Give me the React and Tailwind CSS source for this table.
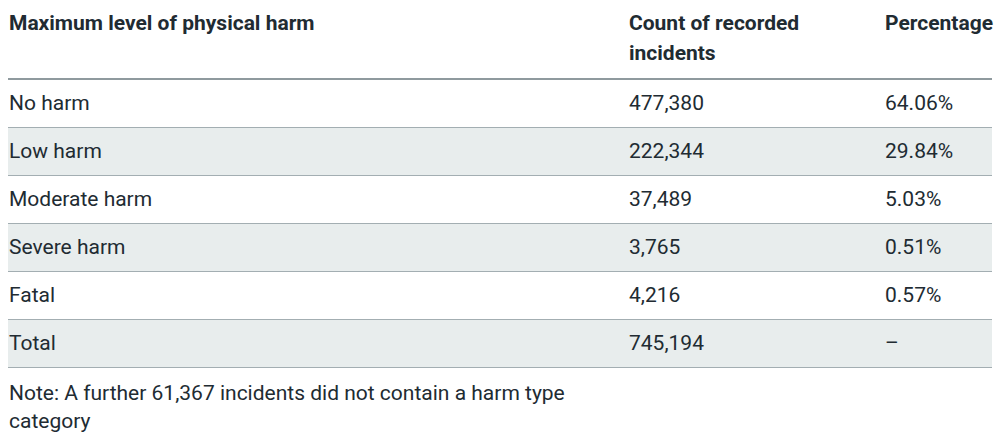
const rows = [
  ["No harm", "477,380", "64.06%"],
  ["Low harm", "222,344", "29.84%"],
  ["Moderate harm", "37,489", "5.03%"],
  ["Severe harm", "3,765", "0.51%"],
  ["Fatal", "4,216", "0.57%"],
  ["Total", "745,194", "–"],
];

export default function App() {
  return (
    <div className="bg-white px-2 text-[21px] leading-[29px] text-[#212b32] font-['Roboto',sans-serif]">
      <table className="w-[984px] border-collapse table-fixed">
        <colgroup>
          <col className="w-[621px]" />
          <col className="w-[256px]" />
          <col className="w-[107px]" />
        </colgroup>
        <thead>
          <tr className="border-b-2 border-[#8f9a9e] text-left align-top leading-[30px]">
            <th className="pl-px pt-2 pb-[10px] font-bold">Maximum level of physical harm</th>
            <th className="pt-2 pb-[10px] font-bold">Count of recorded incidents</th>
            <th className="pt-2 pb-[10px] font-bold whitespace-nowrap">Percentage</th>
          </tr>
        </thead>
        <tbody>
          {rows.map((r, i) => (
            <tr
              key={r[0]}
              className={`border-b border-[#a3aeb2] ${i % 2 ? "bg-[#e8eded]" : "bg-white"}`}
            >
              <td className="pl-px py-[9px]">{r[0]}</td>
              <td className="py-[9px]">{r[1]}</td>
              <td className="py-[9px]">{r[2]}</td>
            </tr>
          ))}
        </tbody>
      </table>
      <p className="mt-[11px] pl-px w-[590px] leading-7">
        Note: A further 61,367 incidents did not contain a harm type category
      </p>
    </div>
  );
}
